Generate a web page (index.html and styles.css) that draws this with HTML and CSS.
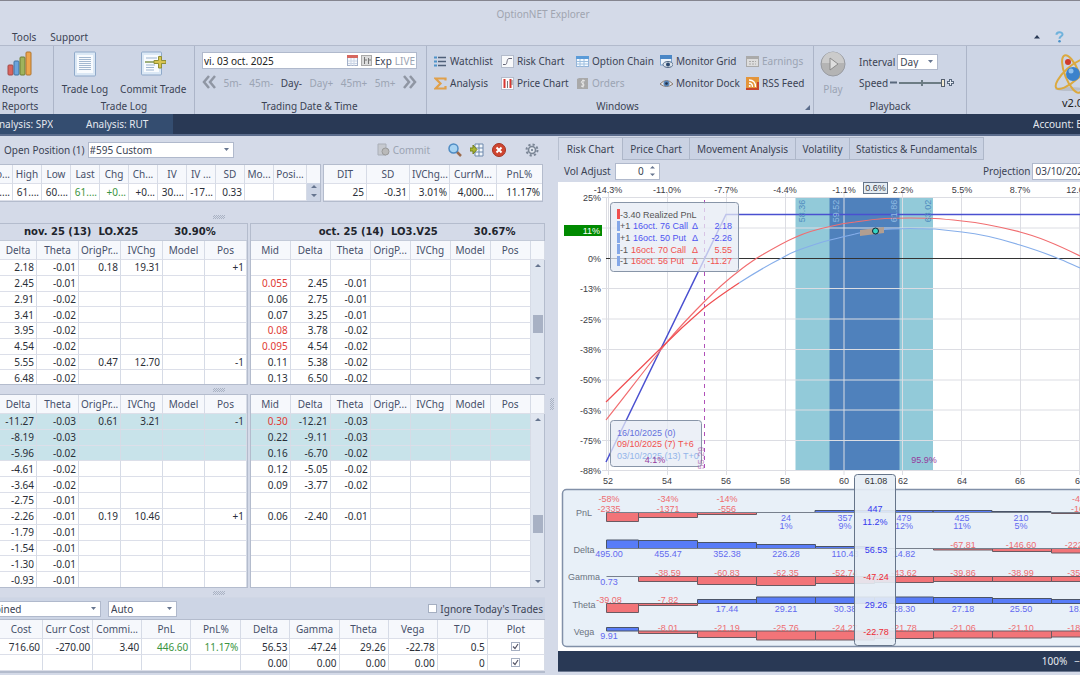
FILE: index.html
```
<!DOCTYPE html>
<html lang="en">
<head>
<meta charset="utf-8">
<title>OptionNET Explorer</title>
<link rel="stylesheet" href="styles.css">
</head>
<body>
<div class="app">
<header class="titlebar">OptionNET Explorer</header>
<nav class="menu">
  <a href="#">Tools</a><a href="#">Support</a>
  <span class="menu-right">
    <svg width="8" height="5"><path d="M1 4.500L4 1l3 3.500z" fill="#293955"/></svg>
    <svg width="9" height="12" viewBox="0 0 10 14"><path d="M1.500 4.500C1.500 .5 8.500 .5 8.500 4C8.500 6 5 6.500 5 9" fill="none" stroke="#6fb2dc" stroke-width="2.400"/><circle cx="5" cy="12" r="1.500" fill="#4a90c8"/></svg>
  </span>
</nav>
<section class="ribbon">
  <div class="group g-reports">
    <div class="big-row"><button class="big"><svg width="26" height="26" viewBox="0 0 26 26"><rect x="1" y="14" width="5" height="10" rx="1" fill="#d9655f" stroke="#a34a48"/><rect x="7" y="10" width="5" height="14" rx="1" fill="#6ba3dc" stroke="#41739f"/><rect x="13" y="6" width="5" height="18" rx="1" fill="#9fb35c" stroke="#6e7e35"/><rect x="19" y="1" width="5" height="23" rx="1" fill="#eda54d" stroke="#b0752e"/></svg>Reports</button></div>
    <div class="caption">Reports</div>
  </div>
  <div class="group g-log">
    <div class="big-row">
      <button class="big"><svg width="26" height="26" viewBox="0 0 26 26"><rect x="2.500" y="1" width="21" height="24" rx="1" fill="#dbe8f5" stroke="#8fa9c9"/><rect x="5" y="4" width="16" height="18" fill="#f8fbfe"/><path d="M7 6.500h12M7 8.500h12M7 10.500h12M7 12.500h12M7 14.500h12M7 16.500h12M7 18.500h12" stroke="#a3b8d0"/></svg>Trade Log</button>
      <button class="big"><svg width="26" height="26" viewBox="0 0 26 26"><rect x="1.500" y="1" width="20" height="23" rx="1" fill="#dbe8f5" stroke="#8fa9c9"/><rect x="4" y="4" width="15" height="17" fill="#f8fbfe"/><path d="M6 7h11M6 14h9M6 16.500h8M6 19h8" stroke="#9cb4cf"/><path d="M5 11h11" stroke="#7f9651" stroke-width="1.500"/><path d="M14 9.500h4.500V5.500h3V9.500h4.500v3h-4.500V17h-3v-4.500H14z" fill="#d8c450" stroke="#8f8f35"/></svg>Commit Trade</button>
    </div>
    <div class="caption">Trade Log</div>
  </div>
  <div class="group g-date">
    <div class="datebox"><input aria-label="Trading date" value="vi. 03 oct. 2025"><svg width="11" height="11"><rect x=".5" y=".5" width="10" height="10" fill="#f7f9fc" stroke="#a3b0c8"/><rect width="11" height="3" fill="#d6675f"/><path d="M1 6h9M1 8.500h9M4 3v8M7 3v8" stroke="#cbd5e6"/></svg><svg width="11" height="11"><rect x=".5" y=".5" width="10" height="10" fill="#dcdcdc" stroke="#aaa"/><path d="M3.500 2v7M3.500 5H6M7.500 3v6M7 5h3" stroke="#777"/></svg><button>Exp</button><button class="off">LIVE</button></div>
    <div class="steps">
      <button aria-label="Back"><svg width="14" height="14"><path d="M7 1L2 7l5 6M13 1L8 7l5 6" fill="none" stroke="#8f96a3" stroke-width="2.500"/></svg></button>
      <button class="off">5m-</button><button class="off">45m-</button><button>Day-</button><button class="off">Day+</button><button class="off">45m+</button><button class="off">5m+</button>
      <button aria-label="Forward"><svg width="14" height="14"><path d="M1 1l5 6-5 6M7 1l5 6-5 6" fill="none" stroke="#8f96a3" stroke-width="2.500"/></svg></button>
    </div>
    <div class="caption">Trading Date &amp; Time</div>
  </div>
  <div class="group g-win">
    <div class="win-grid">
      <button><svg width="13" height="13"><path d="M4 2.500h8M4 6.500h8M4 10.500h8" stroke="#4f6079" stroke-width="1.500"/><path d="M0 2.500h3M0 6.500h3M0 10.500h3" stroke="#4f93c9" stroke-width="2"/></svg>Watchlist</button>
      <button><svg width="13" height="13"><rect x=".5" y=".5" width="12" height="12" fill="#f8f9fb" stroke="#b4bccb"/><path d="M2 9.500h2.500c2 0 1-6 3.500-6h3" fill="none" stroke="#667"/></svg>Risk Chart</button>
      <button><svg width="13" height="13"><rect x=".5" y="1.500" width="12" height="10" fill="#f5faff" stroke="#93b4d8"/><rect y="1" width="13" height="3" fill="#5a9bd8"/><path d="M1 6.500h11M1 9h11M4 4v8M8 4v8" stroke="#9fc0e0"/></svg>Option Chain</button>
      <button><svg width="13" height="13"><rect x=".5" y="1" width="11" height="9" fill="#edf4fb" stroke="#7ea4cf"/><rect y="0" width="12" height="4" fill="#4b87c6"/><ellipse cx="8" cy="9.500" rx="5" ry="3" fill="#dbe3ec" stroke="#546b87"/><circle cx="8" cy="9.500" r="2" fill="#2d4a70"/></svg>Monitor Grid</button>
      <button class="off"><svg width="13" height="13"><rect x=".5" y="1.500" width="12" height="10" fill="#ddd" stroke="#aaa"/><rect y="1" width="13" height="3" fill="#aaa"/><path d="M3 6.500h7M3 9h7" stroke="#aaa" stroke-dasharray="2 1"/></svg>Earnings</button>
      <button><svg width="13" height="13"><path d="M11.500 3.500V1.500H1.500l5 5-5 5h10V9" fill="none" stroke="#e0a04a" stroke-width="2.200"/></svg>Analysis</button>
      <button><svg width="13" height="13"><rect x=".5" y=".5" width="12" height="12" fill="#fbfbfc" stroke="#b4bccb"/><path d="M3.500 2v9M9.500 2v9" stroke="#d8362f" stroke-width="2"/><path d="M6.500 4v7M11 3v5" stroke="#777"/></svg>Price Chart</button>
      <button class="off"><svg width="13" height="13"><path d="M1 2l2-1h9v11H1z" fill="#a9a9a9"/><path d="M9 4C6 2 4 6 6.500 6.500S8 10.500 5 9M7 2.500v8" fill="none" stroke="#eee"/></svg>Orders</button>
      <button><svg width="13" height="13"><path d="M0 7Q6.500 0 13 7Q6.500 12 0 7z" fill="#e3e7ed" stroke="#8c7a6e"/><circle cx="6.500" cy="6.500" r="3" fill="#5683b6"/><circle cx="6.500" cy="6.500" r="1.300" fill="#222e44"/></svg>Monitor Dock</button>
      <button><svg width="13" height="13"><rect width="13" height="13" fill="#e4953a"/><path d="M0 11h13v2H0zM11 5h2v8h-2z" fill="#c9452b"/><path d="M3 6q3.500 0 3.500 4M3 3q6.500 0 6.500 7" fill="none" stroke="#fff" stroke-width="1.300"/><circle cx="3.700" cy="9" r="1" fill="#fff"/></svg>RSS Feed</button>
    </div>
    <div class="caption">Windows</div>
    <svg class="corner" width="5" height="5"><path d="M5 0v5H0z" fill="#5b6d8c"/></svg>
  </div>
  <div class="group g-play">
    <div class="play-row">
      <button class="big off"><svg width="26" height="26" viewBox="0 0 26 26"><circle cx="13" cy="13" r="12" fill="#b4b4b4" stroke="#989ba1"/><path d="M2 12a11 11 0 0 1 22 0z" fill="#cbcbcb"/><path d="M10 7l8 6-8 6z" fill="#dedede" stroke="#8b8b8b"/></svg>Play</button>
      <div class="play-opts">
        <label>Interval<select><option>Day</option></select></label>
        <label>Speed<svg width="7" height="7"><path d="M0 3.500h7" stroke="#59687c" stroke-width="2"/></svg><input type="range" min="0" max="10" value="10" aria-label="Speed"><svg width="7" height="7"><path d="M0 3.500h7M3.500 0v7" stroke="#59687c" stroke-width="3"/><path d="M1 3.500h5M3.500 1v5" stroke="#e5eaf2"/></svg></label>
      </div>
    </div>
    <div class="caption">Playback</div>
  </div>
  <div class="brand">
    <svg width="40" height="46" viewBox="0 0 40 46"><ellipse cx="16" cy="37" rx="14" ry="2" fill="#b9bfca"/><g fill="none" stroke="#dba93f" stroke-width="2"><ellipse cx="19" cy="22" rx="7" ry="20" transform="rotate(-22 19 22)"/><ellipse cx="19" cy="22" rx="7" ry="21" transform="rotate(48 19 22)"/></g><circle cx="20" cy="22" r="7" fill="#3b82cc"/><circle cx="18" cy="19" r="2.500" fill="#8fc0ee"/><circle cx="15" cy="10" r="3" fill="#cf3c2c"/></svg>
    <span>v2.0.0</span>
  </div>
</section>
<nav class="docs"><a href="#" class="doc first"><span>Analysis: SPX</span></a><a href="#" class="doc">Analysis: RUT</a><span class="account">Account: Backtest</span></nav>

<main class="work">
<section class="left">
  <div class="posbar">
    <label for="pos">Open Position (1)</label>
    <select id="pos"><option>#595 Custom</option></select>
    <span class="tools">
      <button class="off"><svg width="13" height="13"><path d="M1 1h8v11H1z" fill="#c6c9cf" stroke="#aaafb8"/><circle cx="8.500" cy="8.500" r="3.500" fill="#b9b9b9" stroke="#9a9a9a"/></svg>Commit</button>
      <button aria-label="Search"><svg width="14" height="14"><path d="M8.500 8.500l4.500 4.500" stroke="#9b6b4d" stroke-width="2.500"/><circle cx="5.500" cy="5.500" r="4.500" fill="#a8d3f2" stroke="#4f8cc4" stroke-width="1.500"/></svg></button>
      <button aria-label="Insert"><svg width="14" height="14"><path d="M5 1h8v12H5z" fill="#f3f7fb" stroke="#6d88ac"/><path d="M5 5h8M5 9h8M9 1v12" stroke="#6d88ac"/><path d="M0 5h3V2l4 4.500L3 11V8H0z" fill="#a9b531" stroke="#74801f"/></svg></button>
      <button aria-label="Close"><svg width="14" height="14"><circle cx="7" cy="7" r="6.500" fill="#cf4530" stroke="#a43424"/><path d="M4.500 4.500l5 5M9.500 4.500l-5 5" stroke="#fff" stroke-width="2"/></svg></button>
      <button aria-label="Settings" class="gear"><svg width="14" height="14"><circle cx="7" cy="7" r="5.500" fill="none" stroke="#7b8696" stroke-width="2" stroke-dasharray="2.200 2.100"/><circle cx="7" cy="7" r="3.500" fill="#dfe4ec" stroke="#7b8696" stroke-width="1.600"/><circle cx="7" cy="7" r="1" fill="#66758a"/></svg></button>
    </span>
  </div>
  <div class="quotes">
    <div class="frame quote-a">
      <table class="grid clipped"><colgroup><col class="w29"><col class="w29"><col class="w29"><col class="w29"><col class="w29"><col class="w29"><col class="w29"><col class="w29"><col class="w29"><col class="w29"><col class="w33"></colgroup>
      <tr><th class="r">Clo...<th>High<th>Low<th>Last<th>Chg<th>Ch...<th>IV<th>IV ...<th>SD<th>Mo...<th>Posi...</tr>
      <tr><td>60....<td>61....<td>60....<td class="green">61....<td class="green">+0...<td>+0...<td>30....<td>-17...<td>0.33<td><td></tr></table>
      <div class="spin"><i></i><button aria-label="Scroll quotes"><svg width="8" height="14"><path d="M1 4l3-3 3 3zM1 10l3 3 3-3z" fill="#66758f"/></svg></button></div>
    </div>
    <div class="frame quote-b">
      <table class="grid"><colgroup><col class="w43"><col class="w43"><col class="w40"><col class="w47"><col class="w46"></colgroup>
      <tr><th>DIT<th>SD<th>IVChg...<th>CurrM...<th>PnL%</tr>
      <tr><td>25<td>-0.31<td>3.01%<td>4,000....<td>11.17%</tr></table>
    </div>
  </div>
  <div class="grip grip-a"></div>
  <div class="chains top">
    <div class="chain ca">
      <h2><span>nov. 25 (13)&nbsp; LO.X25</span><span>30.90%</span></h2>
      <table class="grid head"><colgroup><col class="w37"><col class="w42"><col class="w42"><col class="w42"><col class="w42"><col class="w42"></colgroup><tr><th>Delta<th>Theta<th>OrigPr...<th>IVChg<th>Model<th>Pos</tr></table>
      <div class="body"><table class="grid rows8"><colgroup><col class="w37"><col class="w42"><col class="w42"><col class="w42"><col class="w42"><col class="w42"></colgroup>
      <tr><td>2.18<td>-0.01<td>0.18<td>19.31<td><td>+1</tr>
      <tr><td>2.45<td>-0.01<td><td><td><td></tr>
      <tr><td>2.91<td>-0.02<td><td><td><td></tr>
      <tr><td>3.41<td>-0.02<td><td><td><td></tr>
      <tr><td>3.95<td>-0.02<td><td><td><td></tr>
      <tr><td>4.54<td>-0.02<td><td><td><td></tr>
      <tr><td>5.55<td>-0.02<td>0.47<td>12.70<td><td>-1</tr>
      <tr><td>6.48<td>-0.02<td><td><td><td></tr></table></div>
    </div>
    <div class="chain cb">
      <h2><span>oct. 25 (14)&nbsp; LO3.V25</span><span>30.67%</span></h2>
      <table class="grid head"><colgroup><col class="w40"><col class="w40"><col class="w40"><col class="w40"><col class="w40"><col class="w40"><col class="w40"><col class="w14"></colgroup><tr><th>Mid<th>Delta<th>Theta<th>OrigP...<th>IVChg<th>Model<th>Pos<th></tr></table>
      <div class="body"><table class="grid rows8"><colgroup><col class="w40"><col class="w40"><col class="w40"><col class="w40"><col class="w40"><col class="w40"><col class="w40"></colgroup>
      <tr><td><td><td><td><td><td><td></tr>
      <tr><td class="red">0.055<td>2.45<td>-0.01<td><td><td><td></tr>
      <tr><td>0.06<td>2.75<td>-0.01<td><td><td><td></tr>
      <tr><td>0.07<td>3.25<td>-0.01<td><td><td><td></tr>
      <tr><td class="red">0.08<td>3.78<td>-0.02<td><td><td><td></tr>
      <tr><td class="red">0.095<td>4.54<td>-0.02<td><td><td><td></tr>
      <tr><td>0.11<td>5.38<td>-0.02<td><td><td><td></tr>
      <tr><td>0.13<td>6.50<td>-0.02<td><td><td><td></tr></table>
      <div class="scroll"><i class="up"></i><b class="t1"></b><i class="dn"></i></div></div>
    </div>
  </div>
  <div class="grip grip-b"></div>
  <div class="chains bottom">
    <div class="chain ca">
      <table class="grid head"><colgroup><col class="w37"><col class="w42"><col class="w42"><col class="w42"><col class="w42"><col class="w42"></colgroup><tr><th>Delta<th>Theta<th>OrigPr...<th>IVChg<th>Model<th>Pos</tr></table>
      <div class="body"><table class="grid rows11"><colgroup><col class="w37"><col class="w42"><col class="w42"><col class="w42"><col class="w42"><col class="w42"></colgroup>
      <tr class="hl"><td>-11.27<td>-0.03<td>0.61<td>3.21<td><td>-1</tr>
      <tr class="hl"><td>-8.19<td>-0.03<td><td><td><td></tr>
      <tr class="hl"><td>-5.96<td>-0.02<td><td><td><td></tr>
      <tr><td>-4.61<td>-0.02<td><td><td><td></tr>
      <tr><td>-3.64<td>-0.02<td><td><td><td></tr>
      <tr><td>-2.75<td>-0.01<td><td><td><td></tr>
      <tr><td>-2.26<td>-0.01<td>0.19<td>10.46<td><td>+1</tr>
      <tr><td>-1.79<td>-0.01<td><td><td><td></tr>
      <tr><td>-1.54<td>-0.01<td><td><td><td></tr>
      <tr><td>-1.30<td>-0.01<td><td><td><td></tr>
      <tr><td>-0.93<td>-0.01<td><td><td><td></tr></table></div>
    </div>
    <div class="chain cb">
      <table class="grid head"><colgroup><col class="w40"><col class="w40"><col class="w40"><col class="w40"><col class="w40"><col class="w40"><col class="w40"><col class="w14"></colgroup><tr><th>Mid<th>Delta<th>Theta<th>OrigP...<th>IVChg<th>Model<th>Pos<th></tr></table>
      <div class="body"><table class="grid rows11"><colgroup><col class="w40"><col class="w40"><col class="w40"><col class="w40"><col class="w40"><col class="w40"><col class="w40"></colgroup>
      <tr class="hl"><td class="red">0.30<td>-12.21<td>-0.03<td><td><td><td></tr>
      <tr class="hl"><td>0.22<td>-9.11<td>-0.03<td><td><td><td></tr>
      <tr class="hl"><td>0.16<td>-6.70<td>-0.02<td><td><td><td></tr>
      <tr><td>0.12<td>-5.05<td>-0.02<td><td><td><td></tr>
      <tr><td>0.09<td>-3.77<td>-0.02<td><td><td><td></tr>
      <tr><td><td><td><td><td><td><td></tr>
      <tr><td>0.06<td>-2.40<td>-0.01<td><td><td><td></tr>
      <tr><td><td><td><td><td><td><td></tr>
      <tr><td><td><td><td><td><td><td></tr>
      <tr><td><td><td><td><td><td><td></tr>
      <tr><td><td><td><td><td><td><td></tr></table>
      <div class="scroll"><i class="up"></i><b class="t2"></b><i class="dn"></i></div></div>
    </div>
  </div>
  <div class="grip grip-c"></div>
  <div class="summary">
    <div class="sumbar"><select class="s-comb" aria-label="View"><option>Combined</option></select><select class="s-auto" aria-label="Mode"><option>Auto</option></select><label class="ignore"><input type="checkbox">Ignore Today's Trades</label></div>
    <table class="grid totals"><colgroup><col class="w43"><col class="w50"><col class="w49"><col class="w49"><col class="w50"><col class="w49"><col class="w49"><col class="w49"><col class="w49"><col class="w50"><col class="w57"></colgroup>
    <tr><th>Cost<th>Curr Cost<th>Commi...<th>PnL<th>PnL%<th>Delta<th>Gamma<th>Theta<th>Vega<th>T/D<th>Plot</tr>
    <tr><td>716.60<td>-270.00<td>3.40<td class="green">446.60<td class="green">11.17%<td>56.53<td>-47.24<td>29.26<td>-22.78<td>0.5<td class="c"><input type="checkbox" checked aria-label="Plot row 1"></tr>
    <tr><td><td><td><td><td><td>0.00<td>0.00<td>0.00<td>0.00<td>0<td class="c"><input type="checkbox" checked aria-label="Plot row 2"></tr></table>
  </div>
</section>
<div class="splitter"><div class="vgrip"></div></div>
<section class="right">
  <div class="tabs"><button class="tab on">Risk Chart</button><button class="tab t67">Price Chart</button><button class="tab t106">Movement Analysis</button><button class="tab t54">Volatility</button><button class="tab t134">Statistics &amp; Fundamentals</button></div>
  <div class="voladj"><label for="vol">Vol Adjust</label><span class="spinbox"><input id="vol" value="0"><svg width="7" height="12"><path d="M1 3.500l2.500-2.500L6 3.500zM1 8.500L3.500 11 6 8.500z" fill="#66758f"/></svg></span><span class="proj"><label for="proj">Projection</label><input id="proj" value="03/10/2025"></span></div>
  <svg class="chart" viewBox="558 183 522 469">
    <rect x="558" y="183" width="522" height="469" fill="#fff"/>
    <rect x="795.500" y="198" width="137.500" height="273.500" fill="#92cad9"/>
    <rect x="829.500" y="198" width="70" height="273.500" fill="#4f81bc"/>
    <g class="gl"><path d="M602 198.500H1080M602 229H1080M602 289.500H1080M602 320H1080M602 350.500H1080M602 381H1080M602 411H1080M602 441.500H1080M602 471.500H1080M606.500 198V472M608.500 194V476M667.500 194V476M726.500 194V476M785.500 194V476M844 194V476M902.500 194V476M961.500 194V476M1020.500 194V476M1079.500 194V476"/></g>
    <path d="M606 259.500H1080" stroke="#333"/>
    <path class="purple" d="M704.500 201V471" stroke-dasharray="4 4"/>
    <path d="M606 463L726 215.500H1080" fill="none" stroke="#4a50d0" stroke-width="1.500"/>
    <path d="M606 421C625 397 640 377 660 352C672 336 688 319 704 303C715 292 727 281 739 272C745 267 751 263 757 259C769 252 782 244 796 238C807 233 818 230 830 227.500C838 225.500 846 224 855 223C865 221.500 875 220 885 219.500C893 219 902 219 910 219C918 219 927 219 935 219.500C944 220 953 221 962 222C982 224 1001 228 1020 233C1040 238 1060 247 1080 257" fill="none" stroke="#f16d70" stroke-width="1.200"/>
    <path d="M739 284C753 275 768 266 782 259C787 256 791 254 796 252C807 248 818 244 830 241C838 239 846 237 855 235C862 233 868 232 875 231C887 230 898 229.500 910 229.500C918 229.500 927 230 935 230C944 231 953 232 962 233C981 235 1001 240 1020 246C1033 250 1045 254 1057 259C1065 262 1073 266 1080 269" fill="none" stroke="#86aeea" stroke-width="1.200"/>
    <path d="M606 403L660 350C674 336 689 322 704 309C715 300 727 292 739 284" fill="none" stroke="#f04d50" stroke-width="1.200"/>
    <path d="M860 231l24-3v6l-24 3z" fill="#b29e90"/><circle cx="875.500" cy="232" r="3" fill="#35d3c3" stroke="#123"/>
    <g class="ax mid"><text x="608" y="194">-14.3%</text><text x="667" y="194">-11.0%</text><text x="726" y="194">-7.7%</text><text x="785" y="194">-4.4%</text><text x="844" y="194">-1.1%</text><text x="903" y="194">2.2%</text><text x="962" y="194">5.5%</text><text x="1020" y="194">8.7%</text><text x="1079" y="194">12.0%</text>
    <text x="608" y="485">52</text><text x="667" y="485">54</text><text x="726" y="485">56</text><text x="785" y="485">58</text><text x="844" y="485">60</text><text x="903" y="485">62</text><text x="962" y="485">64</text><text x="1020" y="485">66</text><text x="1080" y="485">68</text></g>
    <rect x="863.500" y="183.500" width="24" height="11" fill="#e4ecf3" stroke="#66758a"/><text class="ax mid" x="875.500" y="192">0.6%</text>
    <g class="ax end"><text x="601" y="202">25%</text><text x="601" y="263">0%</text><text x="601" y="293">-13%</text><text x="601" y="324">-25%</text><text x="601" y="354">-38%</text><text x="601" y="384">-50%</text><text x="601" y="415">-63%</text><text x="601" y="445">-75%</text><text x="601" y="475">-88%</text></g>
    <rect x="564" y="226" width="38" height="11" fill="#008a00"/><text class="end white" x="600" y="235">11%</text>
    <g class="vt mid"><text transform="translate(805 212) rotate(-90)">58.36</text><text class="vl" transform="translate(839 212) rotate(-90)">59.52</text><text class="vl" transform="translate(897 212) rotate(-90)">61.86</text><text transform="translate(931 212) rotate(-90)">63.02</text></g>
    <g class="boxes"><rect x="610.500" y="203.500" width="128" height="69" rx="3"/><rect x="610.500" y="421.500" width="91" height="46" rx="3"/></g>
    <rect x="617" y="210" width="3" height="10" fill="#f0504f"/><path d="M618.500 222v10M618.500 234v10M618.500 245v10M618.500 257v10" stroke="#85a8e8" stroke-width="3"/>
    <g class="lg"><text x="620" y="219">-3.40 Realized PnL</text><text x="620" y="230">+1</text><text x="620" y="242">+1</text><text x="620" y="254">-1</text><text x="620" y="265">-1</text></g>
    <g class="bl"><text x="633" y="230">16oct. 76 Call</text><text x="692" y="230">Δ</text><text x="633" y="242">16oct. 50 Put</text><text x="692" y="242">Δ</text></g>
    <g class="rd"><text x="631" y="254">16oct. 70 Call</text><text x="692" y="254">Δ</text><text x="631" y="265">16oct. 56 Put</text><text x="692" y="265">Δ</text></g>
    <g class="bl end"><text x="732" y="230">2.18</text><text x="732" y="242">-2.26</text></g><g class="rd end"><text x="732" y="254">5.55</text><text x="732" y="265">-11.27</text></g>
    <text class="d1" x="617" y="437">16/10/2025 (0)</text><text class="rd" x="617" y="448">09/10/2025 (7) T+6</text><text class="d3" x="617" y="460">03/10/2025 (13) T+0</text>
    <text class="pp mid" x="655" y="464">4.1%</text><text class="pp mid" x="924" y="464">95.9%</text><text class="pp mid faint" transform="translate(704 459) rotate(-90)">55.29</text>
    <rect x="562.500" y="490.500" width="530" height="157" rx="4" fill="#e8f0f8" stroke="#8190a8" stroke-width="1.500"/>
    <g class="nm mid"><text x="584" y="517">PnL</text><text x="584" y="554">Delta</text><text x="584" y="581">Gamma</text><text x="584" y="609">Theta</text><text x="584" y="636">Vega</text></g>
    <g class="pos"><path d="M815 513.500v-2h118v2zM933 513.500v-2h59v2zM992 513.500v-1h59v1z"/><path d="M606.500 549.500v-8.500h32v8.500zM638.500 549.500v-8h59v8zM697.500 549.500v-6h59v6zM756.500 549.500v-4h59v4zM815.500 549.500v-2h59v2z"/><path d="M697.500 604.500v-4h59v4zM756.500 604.500v-6.500h59v6.500zM815.500 604.500v-6.500h59v6.500zM874.500 604.500v-6.500h59v6.500zM933.500 604.500v-6h59v6zM992.500 604.500v-5h59v5zM1051.500 604.500v-4h59v4z"/><path d="M606.500 632v-3.500h32v3.500z"/></g>
    <g class="neg"><path d="M606.500 513.500v9h32v-9zM638.500 513.500v5h59v-5zM697.500 513.500v2h59v-2zM1051.500 513.500v1h59v-1z"/><path d="M933.500 549.500v1.500h59v-1.500zM992.500 549.500v3h59v-3zM1051.500 549.500v4.500h59v-4.500z"/><path d="M638.500 577.500v5h59v-5zM697.500 577.500v8h59v-8zM756.500 577.500v9h59v-9zM815.500 577.500v7h59v-7zM874.500 577.500v6h59v-6zM933.500 577.500v5h59v-5zM992.500 577.500v5h59v-5zM1051.500 577.500v5h59v-5z"/><path d="M606.500 604.500v9h32v-9zM638.500 604.500v2h59v-2z"/><path d="M638.500 632v2.500h59v-2.500zM697.500 632v6.500h59v-6.500zM756.500 632v9h59v-9zM815.500 632v9h59v-9zM874.500 632v7.500h59v-7.500zM933.500 632v7h59v-7zM992.500 632v7h59v-7zM1051.500 632v6h59v-6z"/></g>
    <path d="M606.500 513.500H1080M606.500 549.500H1080M606.500 577.500H640" stroke="#77808d"/>
    <g class="rl mid"><text x="609" y="503">-58%</text><text x="609" y="513">-2335</text><text x="668" y="503">-34%</text><text x="668" y="513">-1371</text><text x="727" y="503">-14%</text><text x="727" y="513">-556</text><text x="1080" y="503">-4%</text><text x="1080" y="513">-161</text>
      <text x="963" y="549">-67.81</text><text x="1021" y="549">-146.60</text><text x="1080" y="549">-222.15</text>
      <text x="668" y="577">-38.59</text><text x="727" y="577">-60.83</text><text x="786" y="577">-62.35</text><text x="845" y="577">-52.74</text><text x="904" y="577">-43.62</text><text x="963" y="577">-39.86</text><text x="1021" y="577">-38.99</text><text x="1080" y="577">-35.41</text>
      <text x="609" y="604">-39.08</text><text x="668" y="604">-7.82</text>
      <text x="668" y="632">-8.01</text><text x="727" y="632">-21.19</text><text x="786" y="632">-25.76</text><text x="845" y="632">-24.27</text><text x="904" y="632">-21.78</text><text x="963" y="632">-21.06</text><text x="1021" y="632">-21.10</text><text x="1080" y="632">-18.92</text></g>
    <g class="bb mid"><text x="786" y="522">24</text><text x="786" y="530">1%</text><text x="845" y="522">357</text><text x="845" y="530">9%</text><text x="904" y="522">479</text><text x="904" y="530">12%</text><text x="962" y="522">425</text><text x="962" y="530">11%</text><text x="1021" y="522">210</text><text x="1021" y="530">5%</text>
      <text x="609" y="558">495.00</text><text x="668" y="558">455.47</text><text x="727" y="558">352.38</text><text x="786" y="558">226.28</text><text x="845" y="558">110.43</text><text x="904" y="558">14.82</text>
      <text x="609" y="586">0.73</text><text x="727" y="613">17.44</text><text x="786" y="613">29.21</text><text x="845" y="613">30.38</text><text x="904" y="613">28.30</text><text x="963" y="613">27.18</text><text x="1021" y="613">25.50</text><text x="1080" y="613">18.97</text><text x="609" y="640">9.91</text></g>
    <rect x="854.500" y="475.500" width="41" height="171" rx="3" fill="#e6edf5" fill-opacity=".9" stroke="#66758a"/>
    <g class="hv mid"><text class="dk" x="876" y="485">61.08</text><text x="875" y="513">447</text><text x="875" y="526">11.2%</text><text x="876" y="554">56.53</text><text class="neg-t" x="876" y="581">-47.24</text><text x="876" y="609">29.26</text><text class="neg-t" x="876" y="636">-22.78</text></g>
  </svg>
  <footer class="status"><span>100%</span><button aria-label="Zoom out">−</button></footer>
</section>
</main>
</div>
</body>
</html>
```
FILE: styles.css
```
*{box-sizing:border-box}
body{margin:0;background:#d4dae8;color:#3b4354;font:10px/12px "Noto Sans",sans-serif;overflow:hidden}
button,input,select{font:inherit;color:inherit}
button{border:0;background:none;padding:0;white-space:nowrap}
a{color:inherit;text-decoration:none}
.off{color:#9ba4b3}
.app{display:flex;flex-direction:column;border-top:1px solid #85858f}
.titlebar{height:27px;text-align:center;line-height:26px;padding-left:6px;color:#a0a5b0}
.menu{height:18px;display:flex;align-items:center;gap:14px;padding-left:12px;border-bottom:1px solid #b2bacc}
.menu-right{margin-left:auto;display:flex;align-items:center;gap:14px;padding-right:16px}
.ribbon{height:68px;display:flex;background:#cdd5e5}
.group{position:relative;display:flex;flex-direction:column;border-right:1px solid #acb5c8;padding:5px 0 0}
.caption{margin-top:auto;text-align:center;line-height:15px}
.g-reports{width:54px}
.g-reports .big-row,.g-reports .caption{padding-right:13px}
.g-log{width:141px}
.g-date{width:232px;padding:6px 9px 0 7px}
.g-win{width:387px;padding:4px 0 0 7px}
.g-win .caption{padding-right:12px}
.g-play{width:153px;padding-left:6px}
.g-play .caption{padding-right:6px}
.big-row{display:flex;justify-content:center;gap:12px}
.big{display:flex;flex-direction:column;align-items:center;gap:6px}
.datebox{display:flex;align-items:center;gap:3px;background:#fff;border:1px solid #b0b9cc;height:17px;padding:0 1px}
.datebox input{flex:1;min-width:0;border:0;padding:0;color:#222}
.steps{display:flex;justify-content:space-between;align-items:center;height:27px}
.corner{position:absolute;right:3px;bottom:4px}
.win-grid{display:grid;grid-template-columns:67px 75px 84px 86px 66px;grid-auto-rows:22px}
.win-grid button{display:flex;align-items:center;gap:3px;text-align:left}
.play-row{display:flex;gap:13px}
.play-opts label{display:flex;align-items:center;height:21px;gap:2px}
select{appearance:none;border:1px solid #b0b9cc;border-radius:0;padding:0 2px;height:16px;background:#fff url("data:image/svg+xml,%3Csvg xmlns='http://www.w3.org/2000/svg' width='5' height='3'%3E%3Cpath d='M0 0h5L2.5 3z' fill='%2366758f'/%3E%3C/svg%3E") right 4px center no-repeat}
.play-opts select{width:41px}
input[type=range]{appearance:none;width:46px;height:9px;margin:0;background:linear-gradient(#6c7c84,#6c7c84) center/2px 6px no-repeat,linear-gradient(#6c7c84,#6c7c84) center/46px 2px no-repeat}
input[type=range]::-webkit-slider-thumb{appearance:none;width:4px;height:8px;background:#f3ead2;border:1px solid #555f6e}
.brand{flex:1;position:relative;overflow:hidden;padding:6px 0 0 86px;color:#222}
.brand svg{display:block}
.brand span{position:absolute;left:95px;top:51px;font-size:11px}
.docs{height:22px;display:flex;background:#293955;color:#e4e8ef;line-height:21px;border-bottom:2px solid #5b6c8c;white-space:nowrap}
.doc{background:#344d70;padding:0 25px 0 33px}
.doc.first{width:53px;padding:0;display:flex;justify-content:flex-end;overflow:hidden}
.account{margin-left:auto;width:47px;overflow:hidden}
.work{display:flex;align-items:flex-start}
.left{flex:545 1 0;min-width:0}
.splitter{width:13px;padding:262px 0 0 5px}
.right{flex:522 1 0;min-width:0}
.posbar{display:flex;align-items:center;gap:3px;padding:5px 6px 0 4px;height:22px;margin-bottom:6px}
.posbar select{width:146px;padding-left:1px}
.tools{margin-left:auto;display:flex;gap:8px}
.tools button{display:flex;align-items:center;gap:3px}
.tools button:nth-child(2){margin-left:10px}
.tools .gear{margin-left:11px}
.quotes{display:flex;gap:2px;padding-right:2px}
.frame{border:1px solid #b4bccd;display:flex;overflow:hidden;background:#fff}
.quote-a{width:321px;border-left:0}
.quote-b{flex:1}
.grid{border-collapse:separate;border-spacing:0;table-layout:fixed;width:100%}
.grid th,.grid td{padding:0 2px;font-weight:400;white-space:nowrap;overflow:hidden;border-right:1px solid #d6dbe6;border-bottom:1px solid #dcdfe9;text-align:right;color:#2b2f38}
.grid td:empty::after{content:"\00a0"}
.grid th{background:#f6f8fc;text-align:center;color:#46506a;height:18px}
.grid th.r{text-align:right}
.head th,.totals th{height:19px}
.grid .green{color:#3a9440}
.grid .red{color:#e03a35}
.grid .c{text-align:center}
.clipped{width:323px;margin-left:-16px;flex:none}
.quotes td{height:16px}
.spin{flex:1;background:#cdd5e5}
.spin i{display:block;height:18px;background:#f6f8fc}
.spin button{display:block;margin:1px auto}
.w29{width:29px}.w33{width:33px}.w37{width:37px}.w40{width:40px}.w42{width:42px}.w43{width:43px}.w46{width:46px}.w47{width:47px}.w49{width:49px}.w50{width:50px}.w57{width:57px}.w14{width:14px}
.grip{width:12px;height:4px;background:conic-gradient(#a9b2c3 25%,transparent 0 50%,#a9b2c3 0 75%,transparent 0) 0 0/2px 2px}
.grip-a{margin:13px 0 4px 213px}
.grip-b{margin:3px 0 2px 213px}
.grip-c{margin:3px 0 2px 213px}
.vgrip{width:4px;height:12px;background:conic-gradient(#a9b2c3 25%,transparent 0 50%,#a9b2c3 0 75%,transparent 0) 0 0/2px 2px}
.chains{display:flex;gap:2px}
.chain{border:1px solid #b4bccd;min-width:0}
.ca{flex:248 1 0;border-left:0}
.cb{flex:295 1 0}
.chain h2{margin:0;height:17px;display:flex;align-items:center;font:bold 10px/12px "DejaVu Sans",sans-serif;color:#20242c;border-bottom:1px solid #c3cad8;background:#d4dae8;white-space:nowrap}
.ca h2{padding-left:24px;gap:36px}
.cb h2{padding-left:68px;gap:36px}
.body{display:flex;overflow:hidden;background:#fff}
.top .body{height:124px}
.bottom .body{height:173px}
.rows8{height:126px}
.rows11{height:174px}
.hl td{background:#c8e3ea}
.scroll{flex:0 0 14px;display:flex;flex-direction:column;align-items:center;background:#e0e6f0;padding:4px 0}
.scroll i{border:3px solid transparent}
.scroll .up{border-bottom-color:#66758f;border-top:0}
.scroll .dn{border-top-color:#66758f;border-bottom:0;margin-top:auto}
.scroll b{width:10px;height:18px;background:#a8b1c4}
.t1{margin-top:48px}
.t2{margin-top:94px}
.summary{background:#cdd5e5;border-top:1px solid #d0d7e5}
.sumbar{display:flex;align-items:center;gap:7px;height:21px;overflow:hidden}
.s-comb{width:131px;margin-left:-30px}
.s-auto{width:69px}
.ignore{margin-left:auto;display:flex;align-items:center;gap:3px;padding-right:2px}
input[type=checkbox]{appearance:none;width:9px;height:9px;margin:0;border:1px solid #a5afc1;background:#fff}
input[type=checkbox]:checked{background:#fff url("data:image/svg+xml,%3Csvg xmlns='http://www.w3.org/2000/svg' width='7' height='7'%3E%3Cpath d='M1 3.500l2 2L6 1' fill='none' stroke='%23556' stroke-width='1.2'/%3E%3C/svg%3E") center no-repeat}
.totals{border-top:1px solid #b4bccd;border-bottom:2px solid #b4bccd;background:#fff}
.totals td{height:16px}
.tabs{display:flex;height:24px;align-items:stretch}
.tab{border:1px solid #aeb7c9;border-left:0;background:#cad2e3;margin-top:1px}
.on{width:65px;background:#d4dae8;border-bottom:0;border-left:1px solid #b7bfcf}
.t67{width:67px}.t106{width:106px}.t54{width:54px}.t134{width:134px}
.voladj{display:flex;align-items:center;height:22px;padding-left:6px;gap:4px}
.spinbox{display:flex;align-items:center;background:#fff;border:1px solid #b0b9cc;width:45px;height:17px;padding-right:3px}
.spinbox input{border:0;width:28px;padding:0;text-align:right;margin-right:auto;background:none}
.proj{margin-left:auto;display:flex;align-items:center;gap:2px;width:97px;overflow:hidden}
.proj input{flex:none;width:70px;height:17px;border:1px solid #b0b9cc;padding:0 2px}
.chart{display:block;width:100%;font:9px "Liberation Sans",sans-serif}
.mid{text-anchor:middle}
.end{text-anchor:end}
.ax{fill:#3c3c44}
.white{fill:#fff}
.gl path{stroke:#dcdde3;fill:none}
.purple{stroke:#b050b8;stroke-width:1}
.vt{fill:#4f8cc0}
.vt .vl{fill:#8fbbe2}
.boxes rect{fill:#e6ebf4;fill-opacity:.75;stroke:#8895a8}
.lg{fill:#555}
.bl{fill:#4f55f0}
.rd{fill:#f0504f}
.d1{fill:#6470dc}
.d3{fill:#93b5ea}
.pp{fill:#963a9c}
.faint{opacity:.6}
.nm{fill:#6b737f}
.pos path{fill:#587cf8;stroke:#4a5468;stroke-width:1}
.neg path{fill:#f27478;stroke:#6b5a62;stroke-width:1}
.rl{fill:#ee6c70}
.bb{fill:#636af0}
.hv{fill:#3438ee}
.hv .dk{fill:#333}
.hv .neg-t{fill:#ec2a35}
.status{height:21px;background:#293955;color:#e8ecf2;display:flex;align-items:center;justify-content:flex-end;gap:7px;overflow:hidden;border-bottom:1px solid #6b7890}
```
